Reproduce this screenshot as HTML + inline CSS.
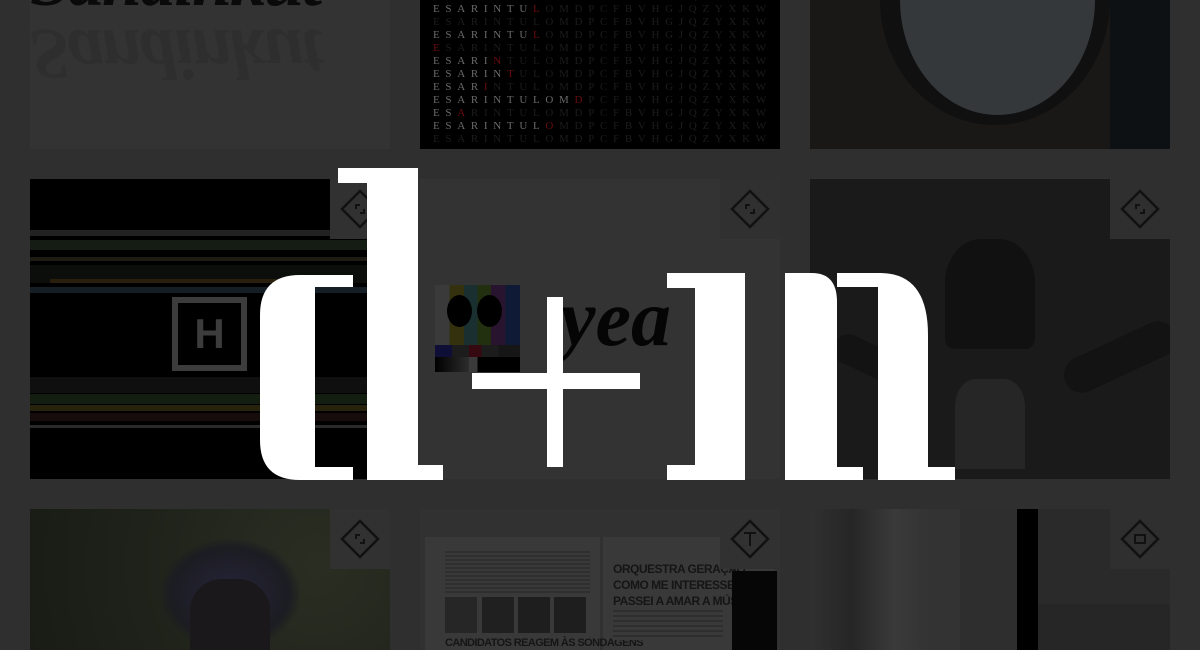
<!DOCTYPE html>
<html><head><meta charset="utf-8"><style>
*{margin:0;padding:0;box-sizing:border-box}
html,body{width:1200px;height:650px;overflow:hidden;background:#2f2f2f;font-family:"Liberation Sans",sans-serif}
body{position:relative}
.t{position:absolute;overflow:hidden}
.b{position:absolute;width:60px;height:60px;background:#313131}
.b svg{position:absolute;left:10px;top:10px}
.grid{position:absolute;font:11px/13px "Liberation Serif",serif;letter-spacing:5.7px;color:#1c1c1c;white-space:pre}
.grid .h{color:#6a6a6a}
.grid .r{color:#6a0c0c}
</style></head><body>

<!-- row 1 -->
<div class="t" style="left:30px;top:0;width:360px;height:149px;background:#333">
  <div style="position:absolute;left:0;top:-55px;font:italic bold 72px/1 'Liberation Serif',serif;color:#0a0a0a;letter-spacing:-2px">Sandinkut</div>
  <div style="position:absolute;left:0;top:18px;font:italic bold 72px/1 'Liberation Serif',serif;color:#2e2e2e;letter-spacing:-2px;transform:scaleY(-1)">Sandinkut</div>
</div>
<div class="t" style="left:420px;top:0;width:360px;height:149px;background:#000">
<div class="grid" style="left:13px;top:-10px"><span class="h">ESARINTUL</span><span>OMDPCFBVHGJQZYXKW</span>
<span class="h">ESARINTU</span><span class="r">L</span><span>OMDPCFBVHGJQZYXKW</span>
<span>ESARINTULOMDPCFBVHGJQZYXKW</span>
<span class="h">ESARINTU</span><span class="r">L</span><span>OMDPCFBVHGJQZYXKW</span>
<span class="r">E</span><span>SARINTULOMDPCFBVHGJQZYXKW</span>
<span class="h">ESARI</span><span class="r">N</span><span>TULOMDPCFBVHGJQZYXKW</span>
<span class="h">ESARIN</span><span class="r">T</span><span>ULOMDPCFBVHGJQZYXKW</span>
<span class="h">ESAR</span><span class="r">I</span><span>NTULOMDPCFBVHGJQZYXKW</span>
<span class="h">ESARINTULOM</span><span class="r">D</span><span>PCFBVHGJQZYXKW</span>
<span class="h">ES</span><span class="r">A</span><span>RINTULOMDPCFBVHGJQZYXKW</span>
<span class="h">ESARINTUL</span><span class="r">O</span><span>MDPCFBVHGJQZYXKW</span>
<span>ESARINTULOMDPCFBVHGJQZYXKW</span></div>
</div>
<div class="t" style="left:810px;top:0;width:360px;height:149px;background:#1a1817">
  <div style="position:absolute;left:70px;top:-125px;width:230px;height:250px;border-radius:50%;background:#101010"></div>
  <div style="position:absolute;left:90px;top:-115px;width:195px;height:230px;border-radius:50%;background:#34383b"></div>
  <div style="position:absolute;left:300px;top:0;width:60px;height:149px;background:#0e1114"></div>
</div>

<!-- row 2 -->
<div class="t" style="left:30px;top:179px;width:360px;height:300px;background:#000">
  <div style="position:absolute;left:0;top:51px;width:300px;height:6px;background:#222"></div>
  <div style="position:absolute;left:0;top:61px;width:360px;height:10px;background:#141c14"></div>
  <div style="position:absolute;left:0;top:78px;width:360px;height:4px;background:#1e1b12"></div>
  <div style="position:absolute;left:0;top:86px;width:360px;height:18px;background:#0c0e0b"></div>
  <div style="position:absolute;left:20px;top:100px;width:300px;height:4px;background:#2a1e0c"></div>
  <div style="position:absolute;left:0;top:108px;width:360px;height:6px;background:#141e24"></div>
  <div style="position:absolute;left:0;top:198px;width:360px;height:16px;background:#0f0f0f"></div>
  <div style="position:absolute;left:0;top:215px;width:360px;height:10px;background:#131d10"></div>
  <div style="position:absolute;left:0;top:226px;width:360px;height:6px;background:#26220c"></div>
  <div style="position:absolute;left:0;top:234px;width:360px;height:8px;background:#160c0c"></div>
  <div style="position:absolute;left:0;top:246px;width:360px;height:3px;background:#2a2a2a"></div>
  <div style="position:absolute;left:142px;top:118px;width:75px;height:74px;border:6px solid #3c3c3c;color:#3c3c3c;font:bold 42px/62px 'Liberation Sans',sans-serif;text-align:center">H</div>
</div>
<div class="b" style="left:330px;top:179px"><svg width="40" height="40" viewBox="0 0 40 40"><path d="M20 2 L38 20 L20 38 L2 20Z" fill="none" stroke="#111" stroke-width="2.5"/><path d="M16 20v-4h4M24 20v4h-4" fill="none" stroke="#111" stroke-width="2"/></svg></div>

<div class="t" style="left:420px;top:179px;width:360px;height:300px;background:#333">
  <div style="position:absolute;left:15px;top:106px;width:85px;height:60px;background:linear-gradient(90deg,#3a3a3a 0 17%,#33310e 17% 34%,#1a3030 34% 50%,#22300f 50% 66%,#28142e 66% 83%,#0e1a36 83%)"></div>
  <div style="position:absolute;left:15px;top:166px;width:85px;height:12px;background:linear-gradient(90deg,#0e0e36 0 20%,#1c1c1c 20% 40%,#360810 40% 55%,#1c1c1c 55% 75%,#161616 75%)"></div>
  <div style="position:absolute;left:15px;top:178px;width:85px;height:15px;background:linear-gradient(90deg,#000,#2c2c2c 40%,#3a3a3a 40% 50%,#000 50%)"></div>
  <div style="position:absolute;left:27px;top:116px;width:25px;height:32px;border-radius:50%;background:#000"></div>
  <div style="position:absolute;left:57px;top:116px;width:25px;height:32px;border-radius:50%;background:#000"></div>
  <div style="position:absolute;left:140px;top:100px;font:italic bold 80px/1 'Liberation Serif',serif;color:#050505">yea</div>
</div>
<div class="b" style="left:720px;top:179px;background:#303030"><svg width="40" height="40" viewBox="0 0 40 40"><path d="M20 2 L38 20 L20 38 L2 20Z" fill="none" stroke="#111" stroke-width="2.5"/><path d="M16 20v-4h4M24 20v4h-4" fill="none" stroke="#111" stroke-width="2"/></svg></div>

<div class="t" style="left:810px;top:179px;width:360px;height:300px;background:#1a1a1a">
  <div style="position:absolute;left:135px;top:60px;width:90px;height:110px;border-radius:40% 40% 10% 10%;background:#111"></div>
  <div style="position:absolute;left:145px;top:200px;width:70px;height:90px;background:#262626;border-radius:30% 30% 0 0"></div>
  <div style="position:absolute;left:250px;top:160px;width:120px;height:36px;border-radius:30px;background:#131313;transform:rotate(-25deg)"></div>
  <div style="position:absolute;left:20px;top:170px;width:100px;height:30px;border-radius:30px;background:#131313;transform:rotate(25deg)"></div>
</div>
<div class="b" style="left:1110px;top:179px;background:#2f2f2f"><svg width="40" height="40" viewBox="0 0 40 40"><path d="M20 2 L38 20 L20 38 L2 20Z" fill="none" stroke="#111" stroke-width="2.5"/><path d="M16 20v-4h4M24 20v4h-4" fill="none" stroke="#111" stroke-width="2"/></svg></div>

<!-- row 3 -->
<div class="t" style="left:30px;top:509px;width:360px;height:141px;background:radial-gradient(circle at 80% 40%,#2a2e22,#1f221a 60%,#191c15)">
  <div style="position:absolute;left:130px;top:30px;width:140px;height:110px;background:radial-gradient(ellipse,#26243a,#1c1c22 60%,transparent 72%)"></div>
  <div style="position:absolute;left:160px;top:70px;width:80px;height:80px;background:#1a181a;border-radius:40% 40% 0 0"></div>
</div>
<div class="b" style="left:330px;top:509px"><svg width="40" height="40" viewBox="0 0 40 40"><path d="M20 2 L38 20 L20 38 L2 20Z" fill="none" stroke="#111" stroke-width="2.5"/><path d="M16 20v-4h4M24 20v4h-4" fill="none" stroke="#111" stroke-width="2"/></svg></div>

<div class="t" style="left:420px;top:509px;width:360px;height:141px;background:#313131">
  <div style="position:absolute;left:5px;top:28px;width:175px;height:120px;background:#393939"></div>
  <div style="position:absolute;left:183px;top:28px;width:172px;height:120px;background:#393939"></div>
  <div style="position:absolute;left:25px;top:42px;width:145px;height:44px;background:repeating-linear-gradient(#2f2f2f 0 2px,#393939 2px 4px)"></div>
  <div style="position:absolute;left:25px;top:88px;width:32px;height:36px;background:#262626"></div>
  <div style="position:absolute;left:62px;top:88px;width:32px;height:36px;background:#202020"></div>
  <div style="position:absolute;left:98px;top:88px;width:32px;height:36px;background:#1e1e1e"></div>
  <div style="position:absolute;left:134px;top:88px;width:32px;height:36px;background:#1e1e1e"></div>
  <div style="position:absolute;left:25px;top:128px;font:bold 11px 'Liberation Sans',sans-serif;color:#151515;letter-spacing:-0.6px;white-space:nowrap">CANDIDATOS REAGEM ÀS SONDAGENS</div>
  <div style="position:absolute;left:193px;top:52px;font:bold 12px/16px 'Liberation Sans',sans-serif;color:#151515;letter-spacing:-0.5px;white-space:nowrap">ORQUESTRA GERAÇÃO:<br>COMO ME INTERESSEI E<br>PASSEI A AMAR A MÚSICA</div>
  <div style="position:absolute;left:193px;top:101px;width:110px;height:30px;background:repeating-linear-gradient(#2e2e2e 0 2px,#393939 2px 5px)"></div>
  <div style="position:absolute;left:312px;top:62px;width:45px;height:100px;background:#060606"></div>
</div>
<div class="b" style="left:720px;top:509px;background:#313131"><svg width="40" height="40" viewBox="0 0 40 40"><path d="M20 2 L38 20 L20 38 L2 20Z" fill="none" stroke="#111" stroke-width="2.5"/><path d="M14 14h12M20 14v13" fill="none" stroke="#111" stroke-width="2"/></svg></div>

<div class="t" style="left:810px;top:509px;width:360px;height:141px;background:#2c2c2c">
  <div style="position:absolute;left:0;top:0;width:120px;height:141px;background:linear-gradient(90deg,#303030,#262626 35%,#3a3a3a 70%,#333)"></div>
  <div style="position:absolute;left:120px;top:0;width:30px;height:141px;background:#333"></div>
  <div style="position:absolute;left:150px;top:0;width:57px;height:141px;background:#2e2e2e"></div>
  <div style="position:absolute;left:207px;top:0;width:21px;height:141px;background:#000"></div>
  <div style="position:absolute;left:228px;top:0;width:132px;height:141px;background:#2a2a2a"></div>
  <div style="position:absolute;left:228px;top:95px;width:132px;height:46px;background:#262626"></div>
</div>
<div class="b" style="left:1110px;top:509px;background:#2f2f2f"><svg width="40" height="40" viewBox="0 0 40 40"><path d="M20 2 L38 20 L20 38 L2 20Z" fill="none" stroke="#111" stroke-width="2.5"/><rect x="15" y="16" width="10" height="8" fill="none" stroke="#111" stroke-width="2"/></svg></div>

<!-- logo -->
<svg style="position:absolute;left:0;top:0" width="1200" height="650" viewBox="0 0 1200 650">
 <g fill="#fff">
  <path d="M300 275 H353 V287 H315 V467 H353 V480 H300 Q260 480 260 440 V315 Q260 275 300 275Z"/>
  <path d="M338 168 H418 V480 H367 V183 H338Z"/>
  <rect x="367" y="465" width="76" height="15"/>
  <rect x="547" y="297" width="16" height="170"/>
  <rect x="472" y="373" width="168" height="16"/>
  <path d="M667 273 H745 V480 H667 V465 H695 V288 H667Z"/>
  <path d="M785 273 H812 Q837 273 837 302 V480 H785Z"/>
  <rect x="837" y="273" width="45" height="14"/>
  <path d="M878 273 H880 Q928 273 928 335 V480 H878Z"/>
  <rect x="837" y="467" width="26" height="13"/>
  <rect x="928" y="467" width="27" height="13"/>
 </g>
</svg>
</body></html>
